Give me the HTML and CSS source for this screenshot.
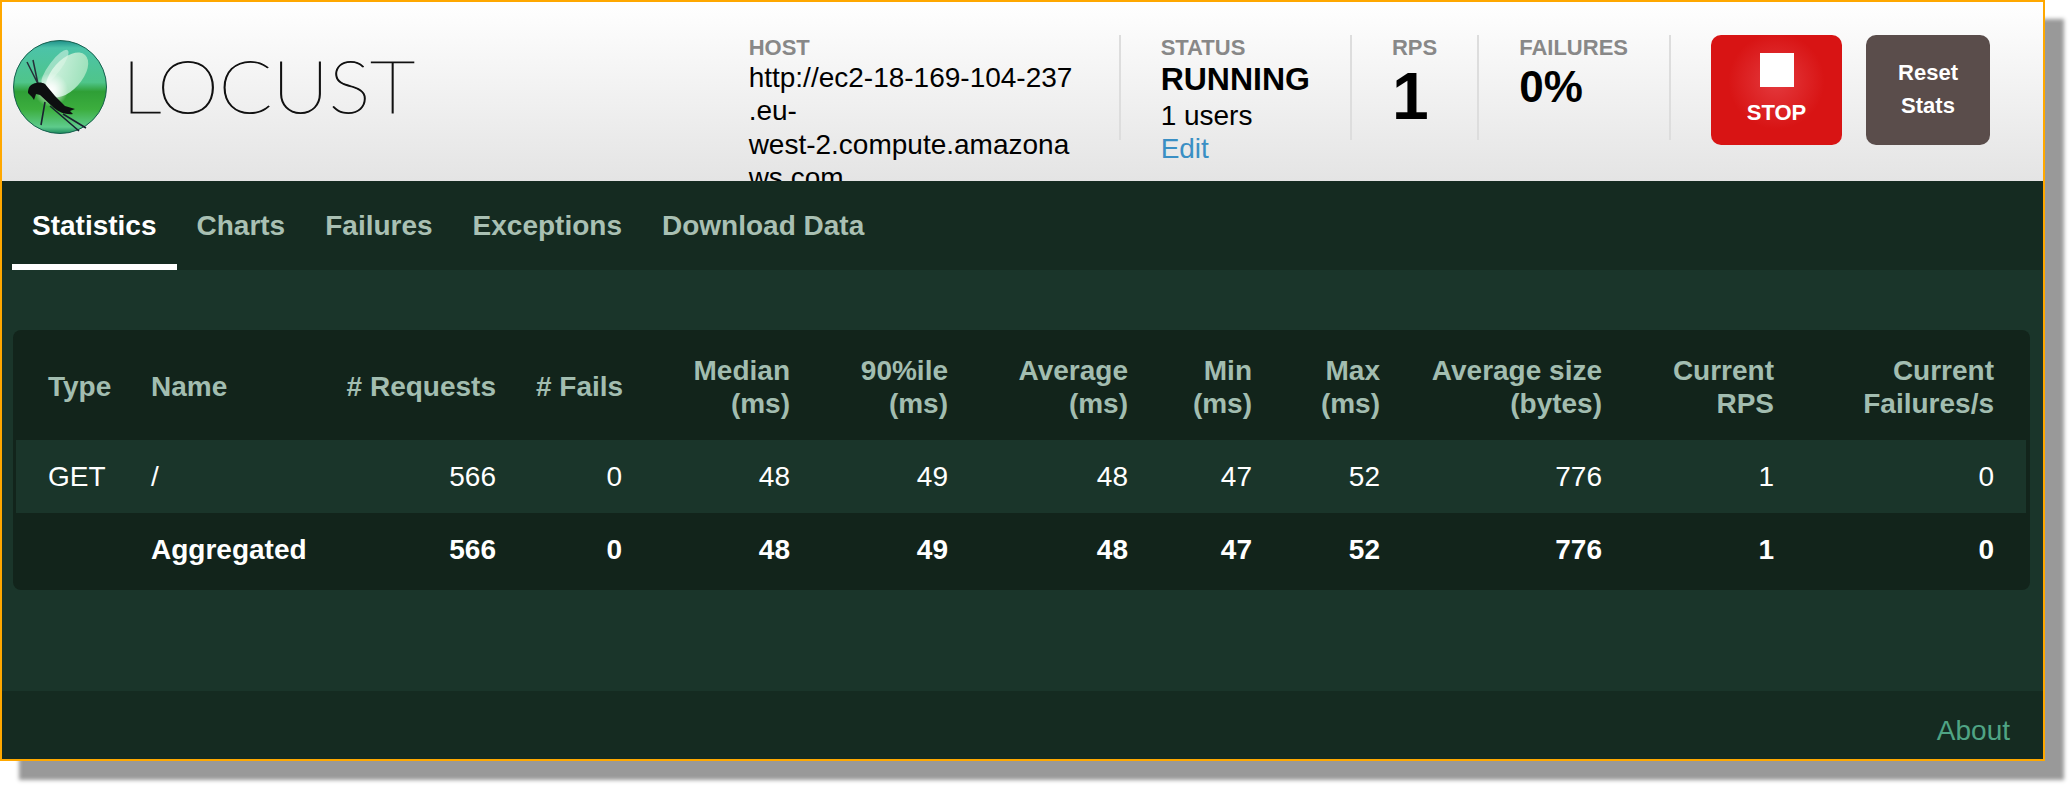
FILE: index.html
```html
<!DOCTYPE html>
<html lang="en">
<head>
  <meta charset="UTF-8">
  <title>Locust</title>
  <link rel="stylesheet" href="styles.css">
</head>
<body>
  <div class="frame">
    <header class="header">
      <div class="logo">
        <svg class="logo-mark" width="94" height="94" viewBox="0 0 94 94">
          <defs>
            <linearGradient id="ball" x1="0" y1="0" x2="0" y2="1">
              <stop offset="0" stop-color="#1f8f8a"/>
              <stop offset="0.08" stop-color="#4cc3a8"/>
              <stop offset="0.45" stop-color="#4fc58a"/>
              <stop offset="0.55" stop-color="#2f9f36"/>
              <stop offset="0.74" stop-color="#3cae3e"/>
              <stop offset="0.93" stop-color="#5ecb8c"/>
              <stop offset="1" stop-color="#1c8a5c"/>
            </linearGradient>
            <radialGradient id="glow">
              <stop offset="0" stop-color="#fff"/>
              <stop offset="0.3" stop-color="#fff" stop-opacity="0.8"/>
              <stop offset="1" stop-color="#fff" stop-opacity="0"/>
            </radialGradient>
            <linearGradient id="wing" x1="1" y1="0" x2="0" y2="1">
              <stop offset="0" stop-color="#98e0b6"/>
              <stop offset="1" stop-color="#eafaf0"/>
            </linearGradient>
          </defs>
          <circle cx="47" cy="47" r="46.5" fill="url(#ball)" stroke="#17604f" stroke-width="1"/>
          <ellipse cx="54" cy="35" rx="15" ry="27" transform="rotate(42 54 35)" fill="url(#wing)" opacity="0.92"/>
          <ellipse cx="42" cy="27" rx="6" ry="21" transform="rotate(37 42 27)" fill="#dff5e8" opacity="0.55"/>
          <circle cx="38" cy="50" r="17" fill="url(#glow)"/>
          <path d="M14 22l11 22M20 20l5 24" stroke="#26303a" stroke-width="1.5" fill="none"/>
          <path d="M32 62l-4 23M37 66l29 25M50 74l23 14" stroke="#1a2030" stroke-width="1.6" fill="none"/>
          <path d="M15 53c0-5 2-8 5-9 4-2 9-2 12 0l10 12 10 10 10 3-5 2 3 3c-6 1-13-1-19-6L27 55l-4-1-2 6-2-3z" fill="#0d0f10"/>
        </svg>
        <span class="logo-text">LOCUST</span>
      </div>
      <div class="stats">
        <div class="stat stat-host">
          <div class="stat-label">HOST</div>
          <div class="host-url">http://ec2-18-169-104-237<br>.eu-<br>west-2.compute.amazona<br>ws.com</div>
        </div>
        <div class="stat">
          <div class="stat-label">STATUS</div>
          <div class="status-value">RUNNING</div>
          <div class="status-users">1 users</div>
          <a class="status-edit" href="#">Edit</a>
        </div>
        <div class="stat">
          <div class="stat-label">RPS</div>
          <div class="rps-value">1</div>
        </div>
        <div class="stat stat-last">
          <div class="stat-label">FAILURES</div>
          <div class="fail-value">0%</div>
        </div>
      </div>
      <a class="btn btn-stop" href="#"><span class="stop-icon"></span>STOP</a>
      <a class="btn btn-reset" href="#">Reset<br>Stats</a>
    </header>

    <nav class="tabs">
      <a class="tab active" href="#">Statistics</a>
      <a class="tab" href="#">Charts</a>
      <a class="tab" href="#">Failures</a>
      <a class="tab" href="#">Exceptions</a>
      <a class="tab" href="#">Download Data</a>
    </nav>

    <main class="main">
      <div class="card">
        <table class="stats-table">
          <thead>
            <tr>
              <th class="left">Type</th>
              <th class="left">Name</th>
              <th># Requests</th>
              <th># Fails</th>
              <th>Median<br>(ms)</th>
              <th>90%ile<br>(ms)</th>
              <th>Average<br>(ms)</th>
              <th>Min<br>(ms)</th>
              <th>Max<br>(ms)</th>
              <th>Average size<br>(bytes)</th>
              <th>Current<br>RPS</th>
              <th>Current<br>Failures/s</th>
            </tr>
          </thead>
          <tbody>
            <tr class="row-light">
              <td class="left">GET</td>
              <td class="left">/</td>
              <td>566</td>
              <td>0</td>
              <td>48</td>
              <td>49</td>
              <td>48</td>
              <td>47</td>
              <td>52</td>
              <td>776</td>
              <td>1</td>
              <td>0</td>
            </tr>
            <tr class="row-total">
              <td class="left"></td>
              <td class="left">Aggregated</td>
              <td>566</td>
              <td>0</td>
              <td>48</td>
              <td>49</td>
              <td>48</td>
              <td>47</td>
              <td>52</td>
              <td>776</td>
              <td>1</td>
              <td>0</td>
            </tr>
          </tbody>
        </table>
      </div>
    </main>

    <footer class="footer">
      <a class="about" href="#">About</a>
    </footer>
  </div>
</body>
</html>
```

FILE: styles.css
```css
html {
  height: 100%;
}

body {
  font-family: "Liberation Sans", Arial, sans-serif;
  background-color: #fff;
  margin: 0;
  min-height: 100%;
}

a {
  text-decoration: none;
}

.frame {
  width: 2045px;
  height: 761px;
  box-sizing: border-box;
  border: 2px solid #ffa800;
  box-shadow: 19px 19px 4px #999;
  display: flex;
  flex-direction: column;
}

/* header */
.header {
  height: 179px;
  flex-shrink: 0;
  box-sizing: border-box;
  padding: 33px 53px 0 11px;
  background: linear-gradient(#fff, #e4e4e4);
  display: flex;
  align-items: flex-start;
}

.logo {
  display: flex;
  align-items: flex-start;
  margin-top: 5px;
}

.logo-mark {
  display: block;
}

.logo-text {
  font-family: Lato, sans-serif;
  font-weight: 200;
  font-size: 72px;
  line-height: 90px;
  color: #111;
  -webkit-text-stroke: 1px #111;
  margin-left: 15px;
  transform: scaleX(1.09);
  transform-origin: left center;
}

.stats {
  display: flex;
  margin-left: auto;
}

.stat {
  height: 105px;
  padding: 0 40px;
  border-right: 2px solid #ddd;
}

.stat-host {
  width: 330px;
}

.stat-last {
  padding-right: 41px;
}

.stat-label {
  font-size: 22px;
  font-weight: bold;
  color: #888;
  line-height: 24px;
  margin-top: 1px;
}

.host-url {
  font-size: 28px;
  line-height: 33.4px;
  color: #000;
  white-space: nowrap;
  margin-top: 1px;
}

.status-value {
  font-size: 32px;
  font-weight: bold;
  line-height: 38px;
  color: #000;
}

.status-users {
  font-size: 28px;
  line-height: 33px;
  margin-top: 1px;
  color: #000;
}

.status-edit {
  font-size: 28px;
  line-height: 33px;
  color: #3a8fc4;
}

.rps-value {
  font-size: 66px;
  font-weight: bold;
  line-height: 72px;
  color: #000;
}

.fail-value {
  font-size: 44px;
  font-weight: bold;
  line-height: 54px;
  color: #000;
}

.btn {
  height: 110px;
  border-radius: 10px;
  color: #fff;
  font-size: 22px;
  font-weight: bold;
  text-align: center;
  box-sizing: border-box;
}

.btn-stop {
  width: 131px;
  margin-left: 40px;
  padding-top: 18px;
  background: radial-gradient(circle at 50% 42%, #e43a3e 0, #d81414 48px);
  display: flex;
  flex-direction: column;
  align-items: center;
}

.stop-icon {
  width: 34px;
  height: 34px;
  background-color: #fff;
  margin-bottom: 13px;
}

.btn-reset {
  width: 124px;
  margin-left: 24px;
  padding-top: 21px;
  line-height: 33px;
  background-color: #5a4d4b;
}

/* tabs */
.tabs {
  height: 89px;
  flex-shrink: 0;
  box-sizing: border-box;
  padding-left: 10px;
  background-color: #152b21;
  display: flex;
}

.tab {
  height: 89px;
  box-sizing: border-box;
  padding: 27px 20px 0;
  font-size: 28px;
  font-weight: bold;
  line-height: 36px;
  color: #a9c0b3;
}

.tab.active {
  color: #fff;
  border-bottom: 6px solid #fff;
}

/* table */
.main {
  flex: 1;
  background-color: #1a352a;
  padding: 60px 13px 0 11px;
}

.card {
  background-color: #12241b;
  border-radius: 8px;
  padding: 0 3px 4px;
}

.stats-table {
  width: 2010px;
  table-layout: fixed;
  border-collapse: collapse;
  font-size: 28px;
  line-height: 33px;
  color: #fff;
}

.stats-table th {
  height: 110px;
  padding: 3px 20px 0;
  text-align: right;
  color: #a2bdb0;
  white-space: nowrap;
  box-sizing: border-box;
}

.stats-table td {
  height: 73px;
  padding: 0 20px;
  text-align: right;
  box-sizing: border-box;
}

.stats-table .left {
  text-align: left;
}

.stats-table tr > :first-child {
  padding-left: 32px;
}

.stats-table tr > :last-child {
  padding-right: 32px;
}

.stats-table th:nth-child(1) { width: 115px; }
.stats-table th:nth-child(2) { width: 195px; }
.stats-table th:nth-child(3) { width: 190px; }
.stats-table th:nth-child(4) { width: 126px; }
.stats-table th:nth-child(5) { width: 168px; }
.stats-table th:nth-child(6) { width: 158px; }
.stats-table th:nth-child(7) { width: 180px; }
.stats-table th:nth-child(8) { width: 124px; }
.stats-table th:nth-child(9) { width: 128px; }
.stats-table th:nth-child(10) { width: 222px; }
.stats-table th:nth-child(11) { width: 172px; }
.stats-table th:nth-child(12) { width: 232px; }

.row-light {
  background-color: #1a352a;
}

.row-total td {
  font-weight: bold;
}

/* footer */
.footer {
  height: 68px;
  flex-shrink: 0;
  box-sizing: border-box;
  padding: 24px 33px 0 0;
  background-color: #152b21;
  text-align: right;
}

.about {
  font-size: 28px;
  line-height: 32px;
  color: #4fa484;
}
```
